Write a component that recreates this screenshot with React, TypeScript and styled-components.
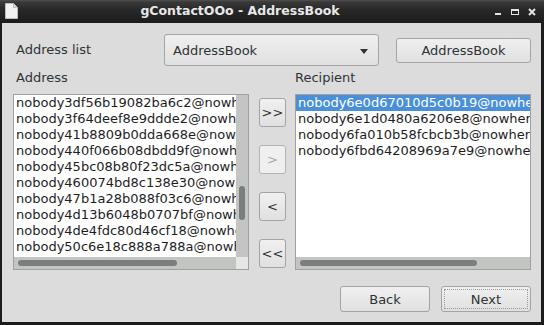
import styled, { createGlobalStyle } from 'styled-components';

const GlobalStyle = createGlobalStyle`
  html, body {
    margin: 0;
    padding: 0;
    background: #1c1c1c;
  }
  body {
    font-family: 'DejaVu Sans', 'Liberation Sans', sans-serif;
    font-size: 13px;
    color: #2e3436;
  }
`;

const addresses = [
  'nobody3df56b19082ba6c2@nowhere.com',
  'nobody3f64deef8e9ddde2@nowhere.com',
  'nobody41b8809b0dda668e@nowhere.com',
  'nobody440f066b08dbdd9f@nowhere.com',
  'nobody45bc08b80f23dc5a@nowhere.com',
  'nobody460074bd8c138e30@nowhere.com',
  'nobody47b1a28b088f03c6@nowhere.com',
  'nobody4d13b6048b0707bf@nowhere.com',
  'nobody4de4fdc80d46cf18@nowhere.com',
  'nobody50c6e18c888a788a@nowhere.com',
  'nobody52a1f0c9d3e7b410@nowhere.com',
];

const recipients = [
  'nobody6e0d67010d5c0b19@nowhere.com',
  'nobody6e1d0480a6206e8@nowhere.com',
  'nobody6fa010b58fcbcb3b@nowhere.com',
  'nobody6fbd64208969a7e9@nowhere.com',
];

const Frame = styled.div`
  width: 544px;
  height: 325px;
  display: flex;
  flex-direction: column;
  background: #1c1c1c;
  overflow: hidden;
`;

const TitleBar = styled.div`
  height: 23px;
  flex: none;
  display: flex;
  align-items: center;
  padding: 0 8px 0 5px;
  background: linear-gradient(#505050 0px, #3a3a3a 2px, #272727 10px, #1c1c1c 23px);
`;

const AppIcon = styled.div`
  width: 17px;
  height: 18px;
  display: flex;
  align-items: flex-start;
  padding-top: 1px;
`;

const Title = styled.div`
  flex: 1;
  text-align: center;
  font-weight: bold;
  font-size: 12.5px;
  color: #e8e8e8;
  padding-right: 36px;
  padding-bottom: 2px;
`;

const WinButtons = styled.div`
  display: flex;
  align-items: center;
  gap: 9px;
`;

const Client = styled.div`
  flex: 1;
  margin: 0 3px 3px 2px;
  background: #dcdcdc;
  padding: 11px 10px 0 11px;
  display: flex;
  flex-direction: column;
`;

const TopRow = styled.div`
  display: flex;
  align-items: center;
  height: 32px;
`;

const Label = styled.div<{ $width?: number }>`
  width: ${(p) => (p.$width ? `${p.$width}px` : 'auto')};
  flex: none;
  padding-left: 3px;
  line-height: 16px;
  color: #2e3436;
  box-sizing: border-box;
`;

const Combo = styled.div`
  width: 215px;
  height: 32px;
  box-sizing: border-box;
  border: 1px solid #a4a4a4;
  border-radius: 3px;
  background: linear-gradient(#efefef, #e0e0e0);
  display: flex;
  align-items: center;
  justify-content: space-between;
  padding: 0 10px 0 8px;
  color: #2e3436;
`;

const Arrow = styled.div`
  width: 0;
  height: 0;
  border-left: 4.5px solid transparent;
  border-right: 4.5px solid transparent;
  border-top: 5px solid #2e3436;
  margin-top: 2px;
`;

const Spacer = styled.div<{ $w: number }>`
  width: ${(p) => p.$w}px;
  flex: none;
`;

const Button = styled.div<{ $w: number; $h: number; $disabled?: boolean; $focus?: boolean }>`
  width: ${(p) => p.$w}px;
  height: ${(p) => p.$h}px;
  box-sizing: border-box;
  border: 1px solid ${(p) => (p.$disabled ? '#b4b4b4' : '#a4a4a4')};
  border-radius: 3px;
  background: ${(p) => (p.$disabled ? '#efefef' : 'linear-gradient(#f0f0f0, #e0e0e0)')};
  color: ${(p) => (p.$disabled ? '#a8a8a8' : '#2e3436')};
  display: flex;
  align-items: center;
  justify-content: center;
  flex: none;
  position: relative;
  &::after {
    content: '';
    display: ${(p) => (p.$focus ? 'block' : 'none')};
    position: absolute;
    inset: 2px;
    border: 1px dotted #9a9a9a;
  }
`;

const LabelsRow = styled.div`
  display: flex;
  margin-top: 4px;
`;

const ListsRow = styled.div`
  display: flex;
  margin-top: 8px;
  height: 176px;
`;

const ListBox = styled.div<{ $vscroll?: boolean }>`
  width: 236px;
  height: 176px;
  box-sizing: border-box;
  border: 1px solid #a0a0a0;
  background: #fff;
  display: grid;
  grid-template-columns: ${(p) => (p.$vscroll ? '1fr 12px' : '1fr')};
  grid-template-rows: 1fr 12px;
  overflow: hidden;
`;

const Rows = styled.div`
  overflow: hidden;
  min-width: 0;
`;

const Row = styled.div<{ $selected?: boolean }>`
  height: 16px;
  line-height: 16px;
  padding-left: 2px;
  white-space: nowrap;
  background: ${(p) => (p.$selected ? '#4a90d9' : 'transparent')};
  color: ${(p) => (p.$selected ? '#ffffff' : '#1e1e1e')};
`;

const Trough = styled.div`
  background: #c3c5c3;
  position: relative;
`;

const Corner = styled.div`
  background: #e6e6e6;
`;

const Thumb = styled.div`
  position: absolute;
  background: #7a7e7e;
  border-radius: 3px;
`;

const Mover = styled.div`
  width: 27px;
  margin: 0 9px 0 10px;
  padding-top: 4px;
  display: flex;
  flex-direction: column;
  gap: 18px;
  flex: none;
`;

const BottomRow = styled.div`
  display: flex;
  justify-content: flex-end;
  gap: 11px;
  margin-top: 16px;
`;

const DocIcon = () => (
  <svg width="13" height="16" viewBox="0 0 13 16">
    <path d="M0.5 0.5 H8.5 L12.5 4.5 V15.5 H0.5 Z" fill="#f2f2f2" stroke="#bdbdbd" strokeWidth="1" />
    <path d="M8.5 0.5 V4.5 H12.5" fill="#d8d8d8" stroke="#bdbdbd" strokeWidth="1" />
  </svg>
);

const MinIcon = () => (
  <svg width="8" height="8" viewBox="0 0 8 8">
    <rect x="1" y="5" width="6" height="2" fill="#e4e4e4" />
  </svg>
);

const MaxIcon = () => (
  <svg width="8" height="8" viewBox="0 0 8 8">
    <rect x="0.5" y="1.5" width="7" height="5" fill="none" stroke="#e4e4e4" strokeWidth="1" />
    <rect x="0" y="1" width="8" height="2" fill="#e4e4e4" />
  </svg>
);

const CloseIcon = () => (
  <svg width="8" height="8" viewBox="0 0 8 8">
    <path d="M1 1 L7 7 M7 1 L1 7" stroke="#e4e4e4" strokeWidth="2" />
  </svg>
);

export default function App() {
  return (
    <>
      <GlobalStyle />
      <Frame>
        <TitleBar>
          <AppIcon>
            <DocIcon />
          </AppIcon>
          <Title>gContactOOo - AddressBook</Title>
          <WinButtons>
            <MinIcon />
            <MaxIcon />
            <CloseIcon />
          </WinButtons>
        </TitleBar>
        <Client>
          <TopRow>
            <Label $width={151}>Address list</Label>
            <Combo>
              AddressBook
              <Arrow />
            </Combo>
            <Spacer $w={17} />
            <Button $w={135} $h={25}>
              AddressBook
            </Button>
          </TopRow>
          <LabelsRow>
            <Label $width={279}>Address</Label>
            <Label>Recipient</Label>
          </LabelsRow>
          <ListsRow>
            <ListBox $vscroll>
              <Rows>
                {addresses.map((a) => (
                  <Row key={a}>{a}</Row>
                ))}
              </Rows>
              <Trough>
                <Thumb style={{ left: 3, width: 6, top: 91, height: 34 }} />
              </Trough>
              <Trough>
                <Thumb style={{ left: 4, width: 159, top: 3, height: 6 }} />
              </Trough>
              <Corner />
            </ListBox>
            <Mover>
              <Button $w={27} $h={29}>&gt;&gt;</Button>
              <Button $w={27} $h={29} $disabled>&gt;</Button>
              <Button $w={27} $h={29}>&lt;</Button>
              <Button $w={27} $h={29}>&lt;&lt;</Button>
            </Mover>
            <ListBox>
              <Rows>
                {recipients.map((r, i) => (
                  <Row key={r} $selected={i === 0}>
                    {r}
                  </Row>
                ))}
              </Rows>
              <Trough>
                <Thumb style={{ left: 4, width: 177, top: 3, height: 6 }} />
              </Trough>
            </ListBox>
          </ListsRow>
          <BottomRow>
            <Button $w={90} $h={26}>Back</Button>
            <Button $w={90} $h={26} $focus>Next</Button>
          </BottomRow>
        </Client>
      </Frame>
    </>
  );
}
